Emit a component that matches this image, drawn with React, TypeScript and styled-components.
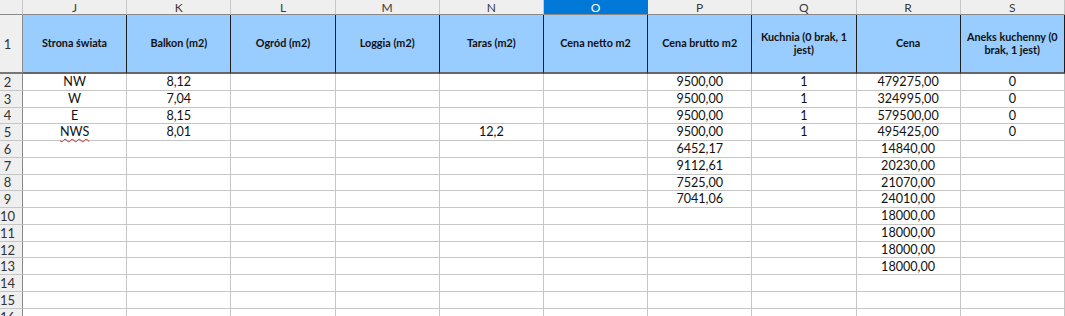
import React from "react";
import styled, { createGlobalStyle, css } from "styled-components";

const GlobalStyle = createGlobalStyle`
  html, body { margin: 0; padding: 0; background: #ffffff; overflow: hidden; }
  body { font-family: Lato, "Noto Sans", sans-serif; }
  * { box-sizing: border-box; }
`;

const ROW_H = 16.77;

const Sheet = styled.div`
  display: grid;
  grid-template-columns: 23px repeat(10, 104.2px);
  grid-template-rows: 15px 59px repeat(15, ${ROW_H}px);
  width: 1065px;
  height: 316px;
  overflow: hidden;
  background: #ffffff;
`;

const Corner = styled.div`
  background: #efefef;
  border-right: 1px solid #c6c6c6;
  border-bottom: 1px solid #8a8a8a;
`;

const ColHeader = styled.div<{ $selected?: boolean }>`
  display: flex;
  align-items: center;
  justify-content: center;
  font-size: 12px;
  color: #3a3a3a;
  background: #efefef;
  border-right: 1px solid #c6c6c6;
  border-bottom: 1px solid #8a8a8a;
  ${(p) =>
    p.$selected &&
    css`
      background: #0078d7;
      color: #ffffff;
      border-right-color: #0078d7;
    `}
`;

const RowHeader = styled.div<{ $tall?: boolean }>`
  display: flex;
  align-items: center;
  justify-content: center;
  padding-right: 7px;
  font-size: 13px;
  color: #333333;
  background: #efefef;
  border-right: 1px solid #8a8a8a;
  border-bottom: ${(p) => (p.$tall ? "2px solid #777777" : "1px solid #c6c6c6")};
`;

const TitleCell = styled.div`
  display: flex;
  align-items: center;
  justify-content: center;
  text-align: center;
  padding: 0 4px;
  font-size: 10.8px;
  font-weight: 700;
  line-height: 12.5px;
  color: #111111;
  background: #99ccff;
  border-right: 1px solid #1e1e1e;
  border-bottom: 2px solid #666666;
`;

const DataCell = styled.div`
  display: flex;
  align-items: center;
  justify-content: center;
  font-size: 12.6px;
  line-height: 1;
  color: #111111;
  white-space: nowrap;
  border-right: 1px solid #c6c6c6;
  border-bottom: 1px solid #c6c6c6;
  padding-top: 1px;
`;

const Misspelled = styled.span`
  text-decoration: underline wavy #e02020;
  text-decoration-thickness: 1px;
  text-underline-offset: 2px;
  text-decoration-skip-ink: none;
`;

const columns = ["J", "K", "L", "M", "N", "O", "P", "Q", "R", "S"];

const titles = [
  "Strona świata",
  "Balkon (m2)",
  "Ogród (m2)",
  "Loggia (m2)",
  "Taras (m2)",
  "Cena netto m2",
  "Cena brutto m2",
  "Kuchnia (0 brak, 1 jest)",
  "Cena",
  "Aneks kuchenny (0 brak, 1 jest)",
];

type Row = Partial<Record<string, string>>;

const data: Row[] = [
  { J: "NW", K: "8,12", P: "9500,00", Q: "1", R: "479275,00", S: "0" },
  { J: "W", K: "7,04", P: "9500,00", Q: "1", R: "324995,00", S: "0" },
  { J: "E", K: "8,15", P: "9500,00", Q: "1", R: "579500,00", S: "0" },
  { J: "NWS", K: "8,01", N: "12,2", P: "9500,00", Q: "1", R: "495425,00", S: "0" },
  { P: "6452,17", R: "14840,00" },
  { P: "9112,61", R: "20230,00" },
  { P: "7525,00", R: "21070,00" },
  { P: "7041,06", R: "24010,00" },
  { R: "18000,00" },
  { R: "18000,00" },
  { R: "18000,00" },
  { R: "18000,00" },
  {},
  {},
  {},
];

export default function App() {
  return (
    <>
      <GlobalStyle />
      <Sheet>
        <Corner />
        {columns.map((c) => (
          <ColHeader key={c} $selected={c === "O"}>
            {c}
          </ColHeader>
        ))}
        <RowHeader $tall>1</RowHeader>
        {titles.map((t) => (
          <TitleCell key={t}>{t}</TitleCell>
        ))}
        {data.map((row, i) => (
          <React.Fragment key={i}>
            <RowHeader>{i + 2}</RowHeader>
            {columns.map((c) => {
              const v = row[c];
              return (
                <DataCell key={c}>
                  {v === "NWS" ? <Misspelled>{v}</Misspelled> : v}
                </DataCell>
              );
            })}
          </React.Fragment>
        ))}
      </Sheet>
    </>
  );
}
